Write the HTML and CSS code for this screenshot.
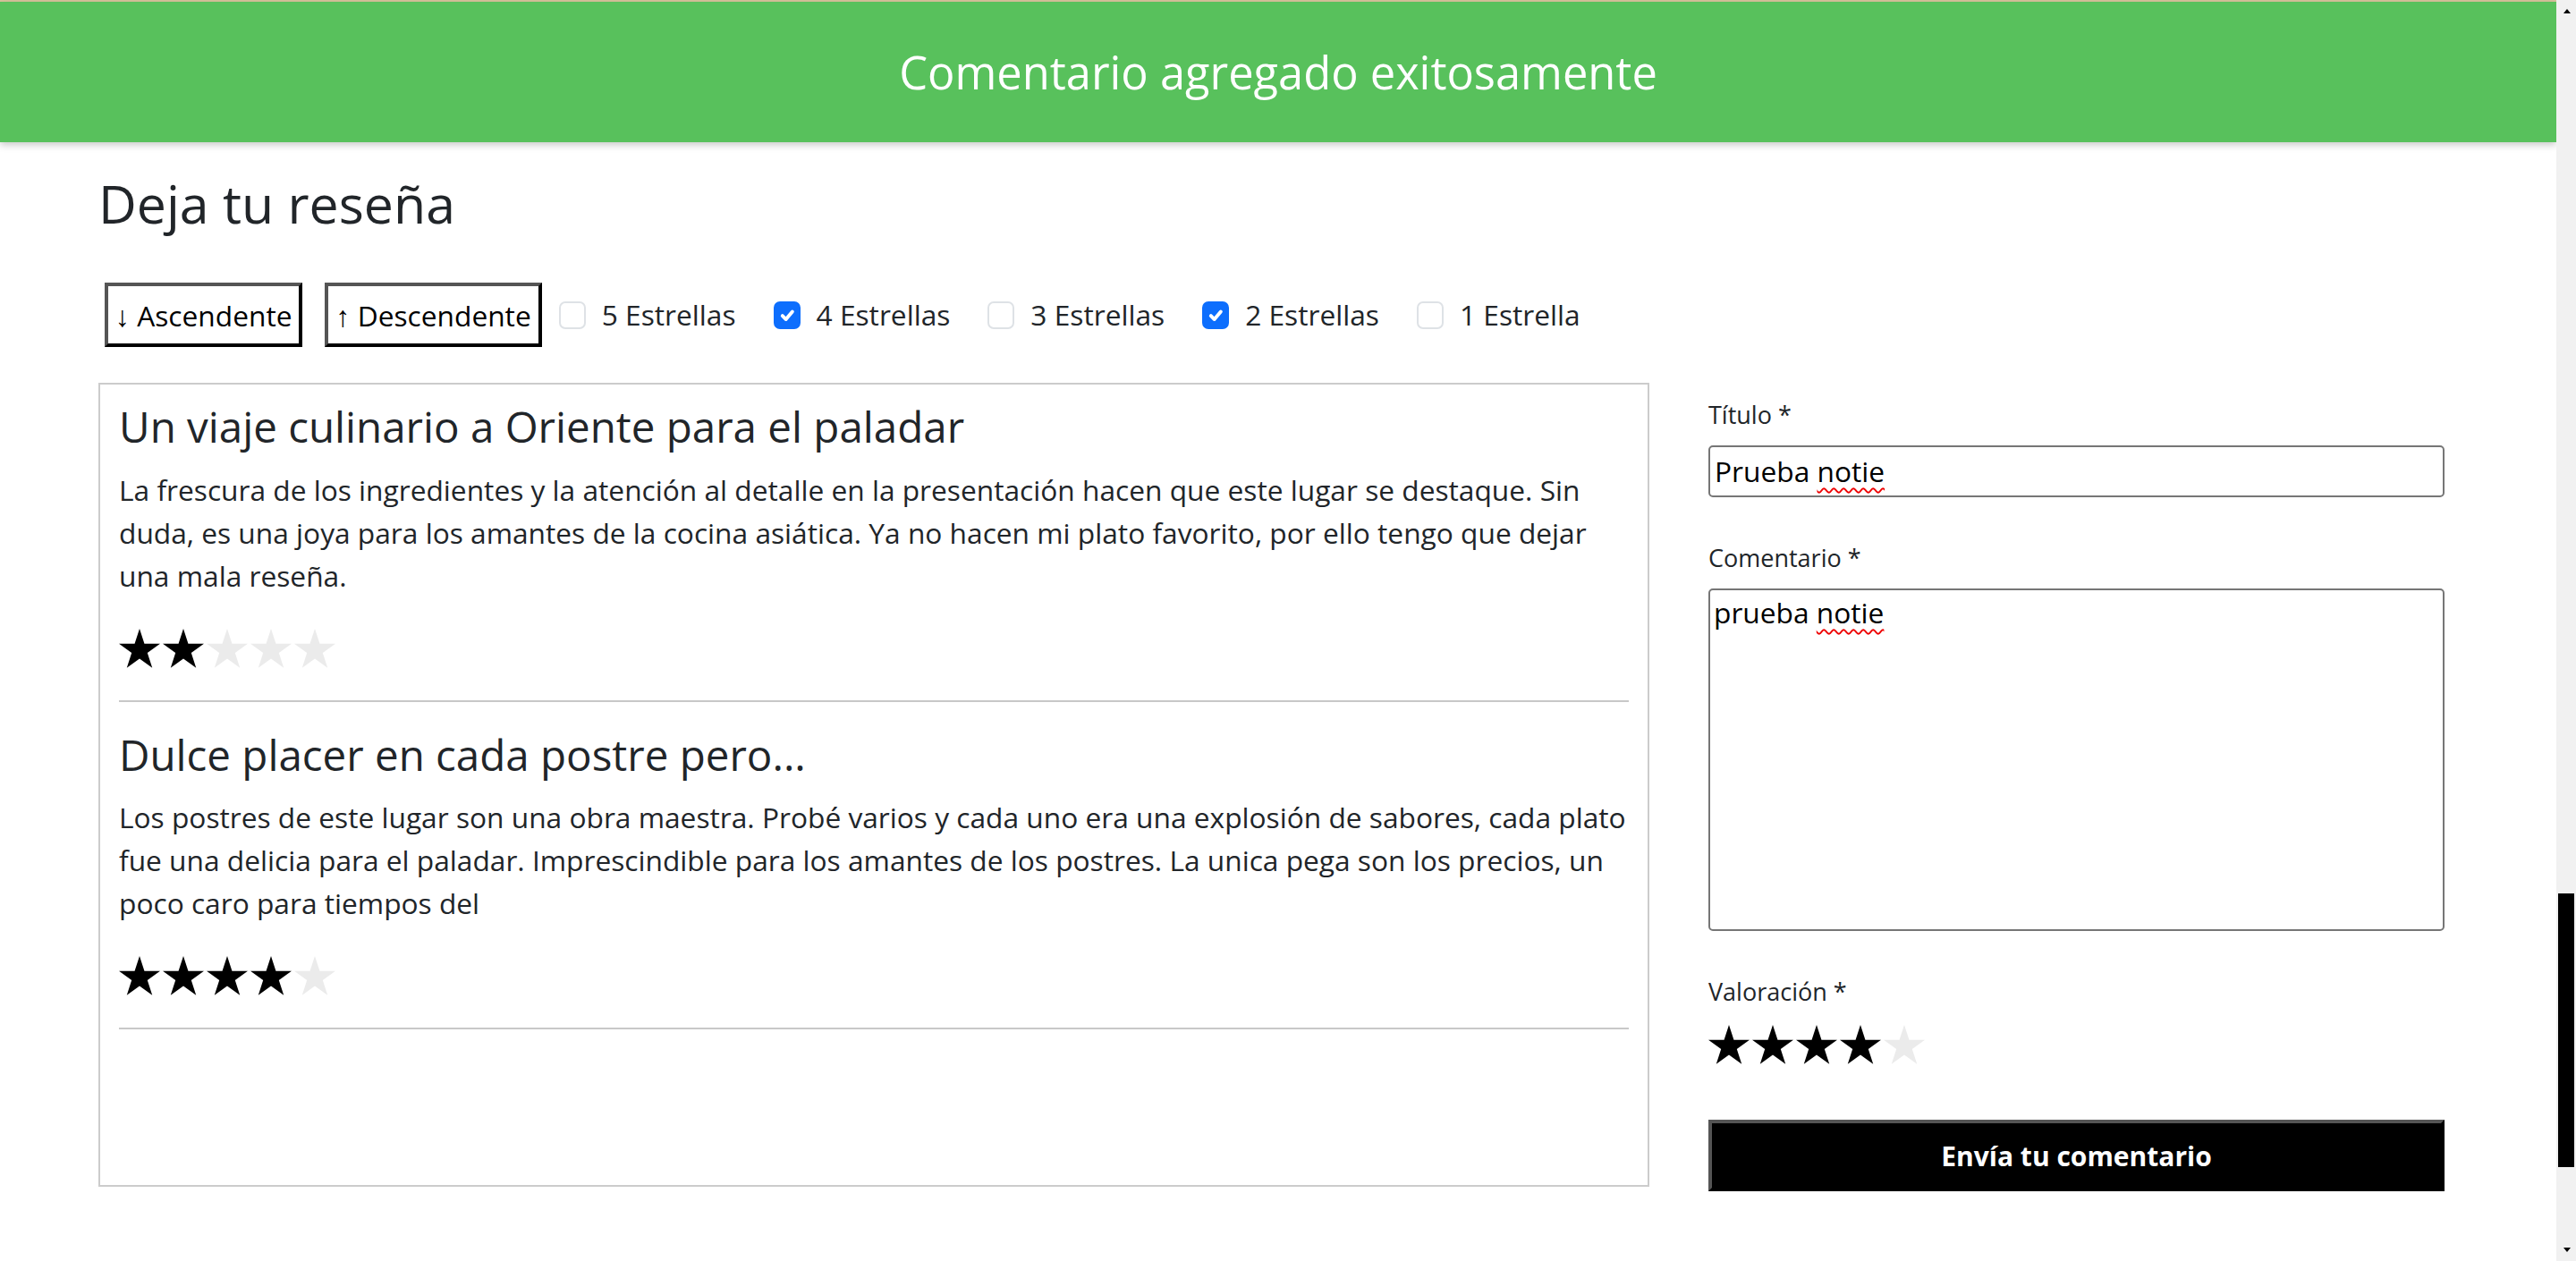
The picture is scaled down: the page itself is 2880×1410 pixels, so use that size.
FILE: index.html
```html
<!DOCTYPE html>
<html lang="es">
<head>
<meta charset="utf-8">
<title>Deja tu reseña</title>
<link rel="stylesheet" href="styles.css">
</head>
<body>
<svg class="defs" width="0" height="0" aria-hidden="true">
  <symbol id="star" viewBox="0 0 46 44"><polygon points="23,0 28.44,16.72 46,16.72 31.8,27.06 37.22,43.78 23,33.45 8.78,43.78 14.2,27.06 0,16.72 17.56,16.72"/></symbol>
  <symbol id="tick" viewBox="0 0 20 20"><path d="M6 10.5l3 3l5.5-6.5" fill="none" stroke="#fff" stroke-width="3" stroke-linecap="round" stroke-linejoin="round"/></symbol>
</svg>
<div class="app">
  <div class="topline"></div>
  <div class="toast">Comentario agregado exitosamente</div>
  <main class="page">
    <h2 class="page-title">Deja tu reseña</h2>
    <div class="filters">
      <button class="sort-btn" type="button"><span class="arrow">↓</span> Ascendente</button>
      <button class="sort-btn" type="button"><span class="arrow">↑</span> Descendente</button>
      <label class="check"><span class="box"></span>5 Estrellas</label>
      <label class="check"><span class="box checked"><svg><use href="#tick"/></svg></span>4 Estrellas</label>
      <label class="check"><span class="box"></span>3 Estrellas</label>
      <label class="check"><span class="box checked"><svg><use href="#tick"/></svg></span>2 Estrellas</label>
      <label class="check"><span class="box"></span>1 Estrella</label>
    </div>
    <div class="content">
      <section class="reviews">
        <article class="review">
          <h3 class="review-title">Un viaje culinario a Oriente para el paladar</h3>
          <p class="review-text">La frescura de los ingredientes y la atención al detalle en la presentación hacen que este lugar se destaque. Sin duda, es una joya para los amantes de la cocina asiática. Ya no hacen mi plato favorito, por ello tengo que dejar una mala reseña.</p>
          <div class="stars">
            <svg class="star on"><use href="#star"/></svg><svg class="star on"><use href="#star"/></svg><svg class="star"><use href="#star"/></svg><svg class="star"><use href="#star"/></svg><svg class="star"><use href="#star"/></svg>
          </div>
          <hr class="sep">
        </article>
        <article class="review">
          <h3 class="review-title">Dulce placer en cada postre pero...</h3>
          <p class="review-text">Los postres de este lugar son una obra maestra. Probé varios y cada uno era una explosión de sabores, cada plato fue una delicia para el paladar. Imprescindible para los amantes de los postres. La unica pega son los precios, un poco caro para tiempos del</p>
          <div class="stars">
            <svg class="star on"><use href="#star"/></svg><svg class="star on"><use href="#star"/></svg><svg class="star on"><use href="#star"/></svg><svg class="star on"><use href="#star"/></svg><svg class="star"><use href="#star"/></svg>
          </div>
          <hr class="sep">
        </article>
      </section>
      <form class="review-form">
        <label class="field-label lbl-first">Título *</label>
        <div class="field input-field">Prueba <span class="spell">notie</span></div>
        <label class="field-label">Comentario *</label>
        <div class="field textarea-field">prueba <span class="spell">notie</span></div>
        <label class="field-label">Valoración *</label>
        <div class="stars form-stars">
          <svg class="star on"><use href="#star"/></svg><svg class="star on"><use href="#star"/></svg><svg class="star on"><use href="#star"/></svg><svg class="star on"><use href="#star"/></svg><svg class="star"><use href="#star"/></svg>
        </div>
        <button class="submit-btn" type="button">Envía tu comentario</button>
      </form>
    </div>
  </main>
</div>
<div class="scrollbar"><div class="arrow-up"></div><div class="thumb"></div><div class="arrow-down"></div></div>
</body>
</html>
```

FILE: styles.css
```css
* { box-sizing: border-box; }
html, body { margin: 0; padding: 0; background: #fff; }
body {
  font-family: "Open Sans", "Noto Sans", sans-serif;
  color: #212529;
  font-size: 31.7px;
  line-height: 48px;
  overflow: hidden;
}
.defs { position: absolute; }
.app { margin-right: 22px; height: 1410px; }
.topline { height: 2px; background: #d8c49c; }
.toast {
  height: 157px;
  background: #58c15c;
  color: #fff;
  font-size: 50.6px;
  display: flex;
  align-items: center;
  justify-content: center;
  box-shadow: 0 3px 8px rgba(0,0,0,0.22);
  position: relative;
}
.page { padding-left: 110px; }
.page-title {
  margin: 32px 0 0;
  font-weight: 400;
  font-size: 59px;
  line-height: 72px;
}
.filters {
  margin-top: 53px;
  height: 72px;
  display: flex;
  align-items: center;
}
.sort-btn {
  font-family: inherit;
  font-size: 31.7px;
  color: #000;
  background: #fff;
  height: 72px;
  padding: 0 8px;
  border: 4px solid;
  border-color: #555 #000 #000 #555;
  margin-left: 7px;
}
.arrow { font-family: "Liberation Sans", "DejaVu Sans", sans-serif; font-size: 32px; }
.sort-btn + .sort-btn { margin-left: 25px; margin-right: 19px; }
.check {
  display: flex;
  align-items: center;
  gap: 18px;
  margin-right: 42px;
}
.box {
  width: 30px;
  height: 31px;
  border: 2px solid #dee2e6;
  border-radius: 7px;
  display: flex;
}
.box.checked { background: #0d6efd; border-color: #0d6efd; }
.box svg { width: 100%; height: 100%; }
.content {
  margin-top: 40px;
  display: grid;
  grid-template-columns: 1734px 823px;
  column-gap: 66px;
  align-items: start;
}
.reviews {
  height: 899px;
  border: 2px solid #cccccc;
  padding: 18px 21px 0 21px;
  overflow: hidden;
}
.review-title {
  margin: 0 0 18px;
  font-weight: 400;
  font-size: 47.5px;
  line-height: 57.6px;
}
.review-text { margin: 0 0 35px; }
.stars { display: flex; gap: 3px; height: 44px; }
.star { width: 46px; height: 44px; fill: #ebebeb; }
.star.on { fill: #000; }
.sep { margin: 36px 0 30px; border: 0; border-top: 2px solid #c8c8c8; height: 0; }
.review-form { display: flex; flex-direction: column; }
.field-label {
  font-size: 27px;
  line-height: 36px;
  margin-top: 50px;
  margin-bottom: 16px;
}
.field-label.lbl-first { margin-top: 18px; }
.field {
  border: 2px solid #767676;
  border-radius: 5px;
  color: #000;
  font-size: 31.7px;
  line-height: 38px;
}
.input-field { height: 58px; padding: 8px 5px; }
.textarea-field { height: 383px; padding: 6px 4px; }
.spell { text-decoration: underline wavy #e00; text-decoration-thickness: 2px; text-underline-offset: 6px; }
.form-stars { margin-top: 3px; }
.submit-btn {
  margin-top: 62px;
  height: 80px;
  background: #000;
  color: #fff;
  font-family: inherit;
  font-weight: 700;
  font-size: 30px;
  border: 4px solid;
  border-color: #555 #000 #000 #555;
}
.scrollbar {
  position: fixed;
  top: 0; right: 0;
  width: 22px; height: 1410px;
  background: #f1f1f1;
}
.thumb { position: absolute; left: 2px; top: 999px; width: 18px; height: 306px; background: #000; }
.arrow-up { position: absolute; left: 8px; top: 10px; border: 4px solid transparent; border-bottom: 5px solid #000; border-top: 0; }
.arrow-down { position: absolute; left: 8px; bottom: 10px; border: 4px solid transparent; border-top: 5px solid #000; border-bottom: 0; }
```
